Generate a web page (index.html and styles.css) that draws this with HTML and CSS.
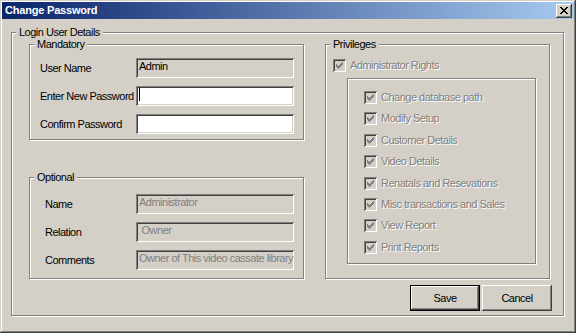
FILE: index.html
```html
<!DOCTYPE html>
<html lang="en">
  <head>
    <meta charset="UTF-8" />
    <meta name="viewport" content="width=device-width, initial-scale=1.0" />
    <link rel="stylesheet" href="styles.css">
  </head>
  <body>
    <div class="window">
      <div class="titlebar">
        <span class="title">Change Password</span>
        <button type="button" class="close">
          <svg xmlns="http://www.w3.org/2000/svg" viewBox="0 0 8 7" width="8" height="7">
            <path d="M0 0h2v1H0zM6 0h2v1H6zM1 1h2v1H1zM5 1h2v1H5zM2 2h4v1H2zM3 3h2v1H3zM2 4h4v1H2zM1 5h2v1H1zM5 5h2v1H5zM0 6h2v1H0zM6 6h2v1H6z" />
          </svg>
        </button>
      </div>
      <div class="client">
        <fieldset class="group details">
          <legend>Login User Details</legend>
          <div class="details-body">
            <div class="columns">
              <div class="left">
                <fieldset class="group mandatory">
                  <legend>Mandatory</legend>
                  <div class="form">
                    <span class="label">User Name</span>
                    <span class="edit readonly">Admin</span>
                    <span class="label">Enter New Password</span>
                    <span class="edit"><span class="caret"></span></span>
                    <span class="label">Confirm Password</span>
                    <span class="edit"></span>
                  </div>
                </fieldset>
                <fieldset class="group optional">
                  <legend>Optional</legend>
                  <div class="form">
                    <span class="label">Name</span>
                    <span class="edit disabled">Administrator</span>
                    <span class="label">Relation</span>
                    <span class="edit disabled">&nbsp;Owner</span>
                    <span class="label">Comments</span>
                    <span class="edit disabled">Owner of This video cassate library</span>
                  </div>
                </fieldset>
              </div>
              <fieldset class="group privileges">
                <legend>Privileges</legend>
                <div class="privileges-body">
                  <label class="check">
                    <span class="box"><svg xmlns="http://www.w3.org/2000/svg" viewBox="0 0 13 13" width="13" height="13"><path d="M3 5h1v1h1v1h1V6h1V5h1V4h1V3h1v3H9v1H8v1H7v1H6v1H5V9H4V8H3z" /></svg></span>
                    Administrator Rights
                  </label>
                  <div class="subgroup">
                    <label class="check">
                      <span class="box"><svg xmlns="http://www.w3.org/2000/svg" viewBox="0 0 13 13" width="13" height="13"><path d="M3 5h1v1h1v1h1V6h1V5h1V4h1V3h1v3H9v1H8v1H7v1H6v1H5V9H4V8H3z" /></svg></span>
                      Change database path
                    </label>
                    <label class="check">
                      <span class="box"><svg xmlns="http://www.w3.org/2000/svg" viewBox="0 0 13 13" width="13" height="13"><path d="M3 5h1v1h1v1h1V6h1V5h1V4h1V3h1v3H9v1H8v1H7v1H6v1H5V9H4V8H3z" /></svg></span>
                      Modify Setup
                    </label>
                    <label class="check">
                      <span class="box"><svg xmlns="http://www.w3.org/2000/svg" viewBox="0 0 13 13" width="13" height="13"><path d="M3 5h1v1h1v1h1V6h1V5h1V4h1V3h1v3H9v1H8v1H7v1H6v1H5V9H4V8H3z" /></svg></span>
                      Customer Details
                    </label>
                    <label class="check">
                      <span class="box"><svg xmlns="http://www.w3.org/2000/svg" viewBox="0 0 13 13" width="13" height="13"><path d="M3 5h1v1h1v1h1V6h1V5h1V4h1V3h1v3H9v1H8v1H7v1H6v1H5V9H4V8H3z" /></svg></span>
                      Video Details
                    </label>
                    <label class="check">
                      <span class="box"><svg xmlns="http://www.w3.org/2000/svg" viewBox="0 0 13 13" width="13" height="13"><path d="M3 5h1v1h1v1h1V6h1V5h1V4h1V3h1v3H9v1H8v1H7v1H6v1H5V9H4V8H3z" /></svg></span>
                      Renatals and Resevations
                    </label>
                    <label class="check">
                      <span class="box"><svg xmlns="http://www.w3.org/2000/svg" viewBox="0 0 13 13" width="13" height="13"><path d="M3 5h1v1h1v1h1V6h1V5h1V4h1V3h1v3H9v1H8v1H7v1H6v1H5V9H4V8H3z" /></svg></span>
                      Misc transactions and Sales
                    </label>
                    <label class="check">
                      <span class="box"><svg xmlns="http://www.w3.org/2000/svg" viewBox="0 0 13 13" width="13" height="13"><path d="M3 5h1v1h1v1h1V6h1V5h1V4h1V3h1v3H9v1H8v1H7v1H6v1H5V9H4V8H3z" /></svg></span>
                      View Report
                    </label>
                    <label class="check">
                      <span class="box"><svg xmlns="http://www.w3.org/2000/svg" viewBox="0 0 13 13" width="13" height="13"><path d="M3 5h1v1h1v1h1V6h1V5h1V4h1V3h1v3H9v1H8v1H7v1H6v1H5V9H4V8H3z" /></svg></span>
                      Print Reports
                    </label>
                  </div>
                </div>
              </fieldset>
            </div>
            <div class="buttons">
              <button type="button" class="default">Save</button>
              <button type="button">Cancel</button>
            </div>
          </div>
        </fieldset>
      </div>
    </div>
  </body>
</html>
```

FILE: styles.css
```css
:root {
  --face: #d4d0c8;
  --shadow: #808080;
  --dark: #404040;
  --light: #ffffff;
}

html,
body {
  margin: 0;
}

body {
  font-family: "Liberation Sans", Arial, sans-serif;
  font-size: 11px;
  line-height: 13px;
  letter-spacing: -0.5px;
  color: #000;
  background: var(--face);
}

/* Window frame */

.window {
  width: 576px;
  height: 333px;
  box-sizing: border-box;
  padding: 2px;
  background: var(--face);
  box-shadow: inset -1px -1px var(--dark), inset 1px 1px var(--face),
    inset -2px -2px var(--shadow), inset 2px 2px var(--light);
}

.titlebar {
  display: flex;
  align-items: center;
  justify-content: space-between;
  height: 17px;
  padding: 0 2px 0 3px;
  background: linear-gradient(to right, #0a246a, #a6caf0);
}

.titlebar .title {
  color: #fff;
  font-weight: bold;
  letter-spacing: -0.2px;
}

.titlebar .close {
  display: flex;
  align-items: center;
  justify-content: center;
  width: 16px;
  height: 14px;
  padding: 0;
  border: none;
  background: var(--face);
  box-shadow: inset -1px -1px var(--dark), inset 1px 1px var(--light),
    inset -2px -2px var(--shadow);
}

.titlebar .close svg {
  display: block;
  fill: #000;
}

/* Group boxes */

.client {
  padding: 7px 0 0 9px;
}

fieldset.group {
  margin: 0;
  padding: 0;
  min-width: 0;
  border: 1px solid var(--shadow);
  box-shadow: inset 1px 1px var(--light), 1px 1px var(--light);
}

fieldset.group > legend {
  margin-left: 4px;
  padding: 0 3px;
  background: var(--face);
}

.details {
  width: 553px;
  box-sizing: border-box;
}

.details-body {
  margin-top: -1px;
  padding: 0 11px 4px 17px;
}

.columns {
  display: grid;
  grid-template-columns: 275px 225px;
  column-gap: 21px;
}

.left {
  display: flex;
  flex-direction: column;
  gap: 31px;
}

/* Text fields */

.form {
  display: grid;
  row-gap: 8px;
  align-items: center;
}

.mandatory .form {
  grid-template-columns: 96px 158px;
  padding: 7px 0 5px 10px;
}

.optional .form {
  grid-template-columns: 91px 158px;
  padding: 10px 0 8px 15px;
}

.form .label {
  white-space: nowrap;
}

.edit {
  height: 20px;
  box-sizing: border-box;
  padding: 2px 3px 0;
  overflow: hidden;
  white-space: nowrap;
  background: #fff;
  box-shadow: inset 1px 1px var(--shadow), inset -1px -1px var(--light),
    inset 2px 2px var(--dark), inset -2px -2px var(--face);
}

.edit.readonly,
.edit.disabled {
  background: var(--face);
}

.edit.disabled {
  color: var(--shadow);
}

.edit .caret {
  display: inline-block;
  width: 1px;
  height: 13px;
  background: #000;
  vertical-align: top;
}

/* Privileges */

.privileges-body {
  padding: 8px 0 0 7px;
}

.check {
  display: flex;
  align-items: center;
  gap: 4px;
  height: 13px;
  white-space: nowrap;
  color: var(--shadow);
  text-shadow: 1px 1px var(--light);
}

.check .box {
  flex: none;
  width: 13px;
  height: 13px;
  background: var(--face);
  box-shadow: inset 1px 1px var(--shadow), inset -1px -1px var(--light),
    inset 2px 2px var(--dark), inset -2px -2px var(--face);
}

.check .box svg {
  display: block;
  fill: var(--shadow);
}

.subgroup {
  display: flex;
  flex-direction: column;
  gap: 8.4px;
  width: 189px;
  height: 186px;
  box-sizing: border-box;
  margin: 6px 0 0 14px;
  padding: 12px 0 0 16px;
  border: 1px solid var(--shadow);
  box-shadow: inset 1px 1px var(--light), 1px 1px var(--light);
}

/* Buttons */

.buttons {
  display: flex;
  justify-content: flex-end;
  gap: 2px;
  margin-top: 6px;
}

.buttons button {
  width: 70px;
  height: 26px;
  padding: 0;
  border: none;
  font: inherit;
  letter-spacing: inherit;
  color: #000;
  background: var(--face);
  box-shadow: inset -1px -1px var(--dark), inset 1px 1px var(--light),
    inset -2px -2px var(--shadow);
}

.buttons button.default {
  border: 1px solid #000;
}
```
